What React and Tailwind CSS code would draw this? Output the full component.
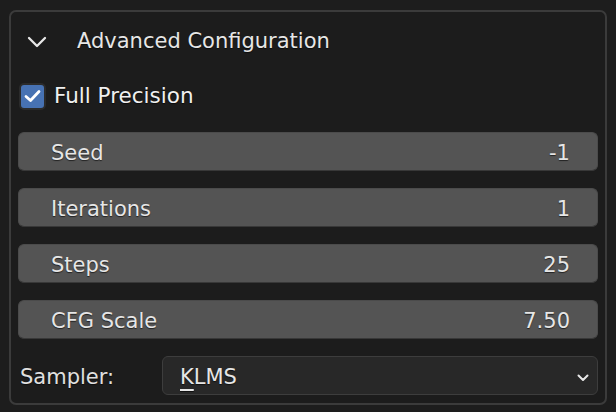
import React from 'react';

const fields = [
  { label: 'Seed', value: '-1' },
  { label: 'Iterations', value: '1' },
  { label: 'Steps', value: '25' },
  { label: 'CFG Scale', value: '7.50' },
];

const shadow = '[text-shadow:0_1px_1px_rgba(0,0,0,0.6)]';

const NumberField = ({ label, value }) => (
  <div className="h-[39px] flex items-center justify-between pt-[4px] pl-[32px] pr-[27px] bg-[#545454] rounded-[6px] border border-[#4b4b4b] border-b-[#383838] text-[21px] text-[#e6e6e6] [text-shadow:0_1px_1px_rgba(0,0,0,0.6)]">
    <span>{label}</span>
    <span>{value}</span>
  </div>
);

export default function App() {
  return (
    <div
      className="w-[616px] h-[412px] bg-[#1d1d1d] pt-[10px] pl-[9px]"
      style={{ fontFamily: '"DejaVu Sans", sans-serif' }}
    >
      <div className="w-[598px] h-[395px] border-2 border-[#3b3b3b] rounded-[7px] bg-[#1c1c1c] px-[7px] flex flex-col">
        {/* header */}
        <div className="h-[56px] flex items-center pt-[3px]">
          <svg width="20" height="12" viewBox="0 0 20 12" className="ml-[9px]">
            <path d="M2 2 L10 10 L18 2" fill="none" stroke="#e8e8e8" strokeWidth="2.3" strokeLinecap="round" strokeLinejoin="round" />
          </svg>
          <span className={`ml-[30px] text-[21px] text-[#e6e6e6] ${shadow}`}>Advanced Configuration</span>
        </div>

        {/* checkbox */}
        <div className="h-[40px] mt-[8px] flex items-center">
          <div className="ml-[1px] w-[27px] h-[27px] rounded-[5px] bg-[#4772b3] border-2 border-[#2b2b2b] flex items-center justify-center">
            <svg width="17" height="14" viewBox="0 0 17 14">
              <path d="M2 7.5 L6.5 11.5 L15 2.5" fill="none" stroke="#ffffff" strokeWidth="2.8" strokeLinecap="round" strokeLinejoin="round" />
            </svg>
          </div>
          <span className={`ml-[8px] text-[21.5px] text-[#f0f0f0] ${shadow}`}>Full Precision</span>
        </div>

        {/* number fields */}
        <div className="mt-[16px] flex flex-col gap-[17px]">
          {fields.map((f) => (
            <NumberField key={f.label} label={f.label} value={f.value} />
          ))}
        </div>

        {/* sampler */}
        <div className="mt-[17px] h-[39px] flex items-center">
          <span className={`w-[144px] pl-[2px] pt-[4px] text-[21px] text-[#e0e0e0] ${shadow}`}>Sampler:</span>
          <div className="flex-1 h-full flex items-center justify-between pt-[4px] pl-[17px] pr-[8px] bg-[#282828] rounded-[6px] border border-[#3d3d3d]">
            <span className={`text-[21px] text-[#e6e6e6] ${shadow}`}>
              <span className="underline decoration-2 underline-offset-[5px]">K</span>LMS
            </span>
            <svg width="12" height="8" viewBox="0 0 12 8">
              <path d="M1.5 1.5 L6 6 L10.5 1.5" fill="none" stroke="#e8e8e8" strokeWidth="2" strokeLinecap="round" strokeLinejoin="round" />
            </svg>
          </div>
        </div>
      </div>
    </div>
  );
}
